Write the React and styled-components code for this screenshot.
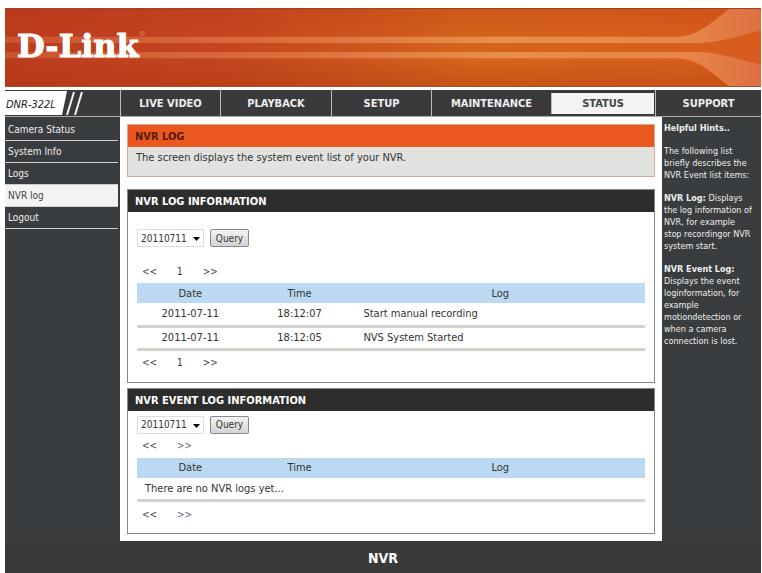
import React, { useState } from "react";
import styled, { createGlobalStyle } from "styled-components";

const tabs = [
  "LIVE VIDEO",
  "PLAYBACK",
  "SETUP",
  "MAINTENANCE",
  "STATUS",
  "SUPPORT",
];

const menu = ["Camera Status", "System Info", "Logs", "NVR log", "Logout"];

const nvrLogs = [
  { date: "2011-07-11", time: "18:12:07", log: "Start manual recording" },
  { date: "2011-07-11", time: "18:12:05", log: "NVS System Started" },
];

function Banner() {
  return (
    <Header>
      <Streaks viewBox="0 0 756 79" preserveAspectRatio="none" aria-hidden="true">
        <defs>
          <linearGradient id="streak" x1="0" x2="1" y1="0" y2="0">
            <stop offset="0" stopColor="#c9542f" />
            <stop offset="0.35" stopColor="#dc6c3c" />
            <stop offset="0.65" stopColor="#e78f4a" />
            <stop offset="0.9" stopColor="#e8864a" />
            <stop offset="1" stopColor="#dd7040" />
          </linearGradient>
        </defs>
        <path
          fill="url(#streak)"
          d="M0 28.500H674C694 27 706 14 724 0H756V22C733 27 718 34 694 35H0Z"
        />
        <path
          fill="url(#streak)"
          d="M0 44H694C718 45 733 52 756 57V79H724C706 65 694 52 674 50.500H0Z"
        />
      </Streaks>
      <Logo>
        D-Link<sup>®</sup>
      </Logo>
    </Header>
  );
}

function Pager({ page }) {
  return (
    <PagerRow>
      <PageButton>&lt;&lt;</PageButton>
      {page && <span>{page}</span>}
      <PageButton $muted={!page}>&gt;&gt;</PageButton>
    </PagerRow>
  );
}

function Query({ label }) {
  return (
    <QueryRow>
      <SelectWrap>
        <DateSelect aria-label={label}>
          <option>20110711</option>
        </DateSelect>
        <Arrow viewBox="0 0 7 4" aria-hidden="true">
          <path d="M0 0H7L3.500 4Z" />
        </Arrow>
      </SelectWrap>
      <QueryButton>Query</QueryButton>
    </QueryRow>
  );
}

function LogTable({ rows }) {
  return (
    <Table>
      <thead>
        <tr>
          <Th $width="21%">Date</Th>
          <Th $width="22%">Time</Th>
          <Th>Log</Th>
        </tr>
      </thead>
      <tbody>
        {rows.map((row) => (
          <tr key={row.time}>
            <Td>{row.date}</Td>
            <Td>{row.time}</Td>
            <Td $left>{row.log}</Td>
          </tr>
        ))}
        {rows.length === 0 && (
          <tr>
            <Td $left colSpan={3}>
              There are no NVR logs yet...
            </Td>
          </tr>
        )}
      </tbody>
    </Table>
  );
}

function App() {
  const [tab, setTab] = useState("STATUS");
  const [item, setItem] = useState("NVR log");

  return (
    <Page>
      <GlobalStyle />
      <Banner />
      <Nav>
        <Model>
          <ModelName>DNR-322L</ModelName>
          <Slashes viewBox="0 0 24 24" aria-hidden="true">
            <path fill="#fff" d="M0 0H5L0 24Z" />
            <path stroke="#f4f4f4" strokeWidth="2" d="M12 1L5 24M20 1L13 24" />
          </Slashes>
        </Model>
        {tabs.map((name) => (
          <Tab key={name} $active={tab === name} onClick={() => setTab(name)}>
            {name}
          </Tab>
        ))}
      </Nav>
      <Body>
        <Sidebar>
          {menu.map((name) => (
            <MenuLink
              key={name}
              href="#"
              $active={item === name}
              onClick={() => setItem(name)}
            >
              {name}
            </MenuLink>
          ))}
        </Sidebar>
        <Main>
          <Intro>
            <h1>NVR LOG</h1>
            <p>The screen displays the system event list of your NVR.</p>
          </Intro>
          <Panel>
            <h2>NVR LOG INFORMATION</h2>
            <PanelBody $roomy>
              <Query label="NVR log date" />
              <Pager page={1} />
              <LogTable rows={nvrLogs} />
              <Pager page={1} />
            </PanelBody>
          </Panel>
          <Panel>
            <h2>NVR EVENT LOG INFORMATION</h2>
            <PanelBody>
              <Query label="NVR event log date" />
              <Pager />
              <LogTable rows={[]} />
              <Pager />
            </PanelBody>
          </Panel>
        </Main>
        <Hints>
          <p>
            <b>Helpful Hints..</b>
          </p>
          <p>
            The following list
            <br />
            briefly describes the
            <br />
            NVR Event list items:
          </p>
          <p>
            <b>NVR Log:</b> Displays
            <br />
            the log information of
            <br />
            NVR, for example
            <br />
            stop recordingor NVR
            <br />
            system start.
          </p>
          <p>
            <b>NVR Event Log:</b>
            <br />
            Displays the event
            <br />
            loginformation, for
            <br />
            example
            <br />
            motiondetection or
            <br />
            when a camera
            <br />
            connection is lost.
          </p>
        </Hints>
      </Body>
      <Footer>NVR</Footer>
    </Page>
  );
}

export default App;

const GlobalStyle = createGlobalStyle`
  * {
    box-sizing: border-box;
  }

  body {
    margin: 0;
    background: #fff;
    font-family: "DejaVu Sans Condensed", "DejaVu Sans", sans-serif;
    font-size: 11px;
    color: #333;
  }

  h1, h2, p {
    margin: 0;
  }

  button {
    font: inherit;
    color: inherit;
    border: 0;
    padding: 0;
    background: none;
    cursor: pointer;
  }
`;

const Page = styled.div`
  display: flex;
  flex-direction: column;
  min-height: 100vh;
  padding: 8px 1px 0 5px;
`;

const Header = styled.header`
  position: relative;
  display: flex;
  align-items: flex-start;
  height: 79px;
  margin-bottom: 3px;
  padding: 18px 12px;
  border-top: 1px solid #94452a;
  border-bottom: 1px solid #a85030;
  background:
    linear-gradient(rgba(190, 50, 20, 0.25), transparent 40%, transparent 65%, rgba(160, 50, 10, 0.3)),
    linear-gradient(90deg, #bb3c1e, #c4461f 30%, #d5641b 62%, #d85c1c);
`;

const Streaks = styled.svg`
  position: absolute;
  inset: 0;
  width: 100%;
  height: 100%;
`;

const Logo = styled.div`
  position: relative;
  display: flex;
  color: #fff;
  font-family: "DejaVu Serif", serif;
  font-size: 32px;
  font-weight: 700;
  line-height: 38px;
  -webkit-text-stroke: 1px #fff;

  sup {
    color: #e08a70;
    font-size: 7px;
    font-weight: 400;
    line-height: 14px;
    -webkit-text-stroke: 0;
  }
`;

const Nav = styled.nav`
  display: grid;
  grid-template-columns: 115px 100fr 111fr 100fr 120fr 104fr 106fr;
  height: 27px;
  background: #3a3a3c;
  border-bottom: 1px solid #aaa;
`;

const Model = styled.div`
  display: flex;
  align-items: center;
  padding: 1px 0;
`;

const ModelName = styled.span`
  width: 57px;
  height: 24px;
  background: #fff;
  color: #222;
  font-size: 11px;
  font-style: italic;
  line-height: 28px;
  padding-left: 1px;
  white-space: nowrap;
`;

const Slashes = styled.svg`
  width: 24px;
  height: 24px;
`;

const Tab = styled.button`
  && {
    margin: ${(props) => (props.$active ? "3px 1px 2px 0" : "0")};
    border-left: 1px solid #bbb;
    background: ${(props) => (props.$active ? "#f3f3f3" : "transparent")};
    color: ${(props) => (props.$active ? "#444" : "#eee")};
    font-size: 11px;
    font-weight: 700;
  }
`;

const Body = styled.div`
  display: flex;
  flex: 1;
  background: #3a3d40;
`;

const Sidebar = styled.aside`
  width: 115px;
  padding: 2px 2px 0 0;
`;

const MenuLink = styled.a`
  display: block;
  height: 22px;
  padding-left: 3px;
  border-bottom: 1px solid #ccc;
  background: ${(props) => (props.$active ? "#f3f3f3" : "transparent")};
  color: ${(props) => (props.$active ? "#444" : "#eee")};
  font-size: 10px;
  line-height: 21px;
  text-decoration: none;
`;

const Main = styled.main`
  flex: 1;
  padding: 7px;
  background: #fff;
`;

const Intro = styled.section`
  margin-bottom: 12px;
  border: 1px solid #d8a898;
  background: #e2e2e0;

  h1 {
    height: 22px;
    padding-left: 7px;
    background: #ea5820;
    color: #5a1a08;
    font-size: 11px;
    line-height: 24px;
  }

  p {
    height: 29px;
    padding-left: 8px;
    line-height: 22px;
  }
`;

const Panel = styled.section`
  border: 1px solid #888;

  & + & {
    margin-top: 5px;
  }

  h2 {
    height: 22px;
    padding-left: 7px;
    background: #2d2d2d;
    color: #fff;
    font-size: 11px;
    line-height: 24px;
  }
`;

const PanelBody = styled.div`
  padding: ${(props) => (props.$roomy ? "17px 9px 7px" : "5px 9px 7px")};

  > div:nth-child(2) {
    margin-top: ${(props) => (props.$roomy ? "12px" : "0")};
  }
`;

const QueryRow = styled.div`
  display: flex;
  gap: 6px;
  height: 18px;
`;

const SelectWrap = styled.div`
  position: relative;
  width: 67px;
`;

const DateSelect = styled.select`
  appearance: none;
  width: 100%;
  height: 18px;
  padding: 0 3px;
  border: 1px solid #ddd;
  background: #fff;
  color: #333;
  font-family: inherit;
  font-size: 10px;
`;

const Arrow = styled.svg`
  position: absolute;
  top: 8px;
  right: 4px;
  width: 7px;
  height: 4px;
  pointer-events: none;
`;

const QueryButton = styled.button`
  && {
    width: 39px;
    border: 1px solid #888;
    border-radius: 2px;
    background: linear-gradient(#f3f3f3, #d4d4d4);
    font-size: 10px;
  }
`;

const PagerRow = styled.div`
  display: flex;
  align-items: center;
  gap: 20px;
  height: 24px;
  padding-left: 5px;
  font-size: 10px;
`;

const PageButton = styled.button`
  && {
    color: ${(props) => (props.$muted ? "#667" : "#444")};
  }
`;

const Table = styled.table`
  width: 100%;
  border-collapse: collapse;
  table-layout: fixed;
`;

const Th = styled.th`
  width: ${(props) => props.$width || "auto"};
  height: 20px;
  padding: 0;
  background: #bbd9f2;
  font-weight: 400;
`;

const Td = styled.td`
  height: 23px;
  padding: ${(props) => (props.$left ? "0 8px" : "0")};
  border-bottom: 3px solid #d4d2cc;
  text-align: ${(props) => (props.$left ? "left" : "center")};
`;

const Hints = styled.aside`
  width: 99px;
  padding: 5px 0 0 2px;
  color: #eee;
  font-size: 9px;
  line-height: 12px;
  white-space: nowrap;

  p {
    margin-bottom: 11px;
  }
`;

const Footer = styled.footer`
  height: 32px;
  background: #3a3a3b;
  color: #fff;
  font-size: 14px;
  font-weight: 700;
  line-height: 34px;
  text-align: center;
`;
